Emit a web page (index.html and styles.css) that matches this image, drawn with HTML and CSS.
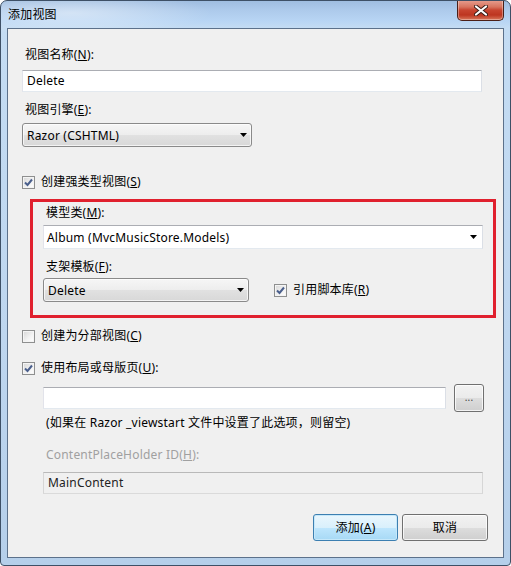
FILE: index.html
```html
<!DOCTYPE html>
<html lang="zh-CN">
<head>
<meta charset="utf-8">
<title>添加视图</title>
<link rel="stylesheet" href="styles.css">
</head>
<body>
<div class="window">
  <div class="titlebar">
    <span class="title">添加视图</span>
    <div class="close">
      <svg width="14" height="11" viewBox="0 0 14 11"><path d="M2 1.5 L12 9.5 M12 1.5 L2 9.5" stroke="#3a1c16" stroke-width="4" stroke-linecap="round"/><path d="M2 1.5 L12 9.5 M12 1.5 L2 9.5" stroke="#ffffff" stroke-width="2.2" stroke-linecap="round"/></svg>
    </div>
  </div>
  <div class="client">
    <div class="label m-l1">视图名称(<u>N</u>):</div>
    <div class="textbox w-full m-tb1">Delete</div>
    <div class="label m-l2">视图引擎(<u>E</u>):</div>
    <div class="combo w-engine m-c1"><span>Razor (CSHTML)</span><svg class="arrow" width="7" height="4" viewBox="0 0 7 4"><path d="M0 0 H7 L3.5 4 Z" fill="#000"/></svg></div>
    <div class="check m-ck1"><span class="cb"><svg width="11" height="11" viewBox="0 0 11 11"><path d="M2 5.5 L4.5 8 L9 2.5" stroke="#4a5f8c" stroke-width="2" fill="none"/></svg></span>创建强类型视图(<u>S</u>)</div>
    <div class="redbox">
      <div class="label">模型类(<u>M</u>):</div>
      <div class="ecombo w-model m-c2"><span>Album (MvcMusicStore.Models)</span><svg class="arrow" width="7" height="4" viewBox="0 0 7 4"><path d="M0 0 H7 L3.5 4 Z" fill="#000"/></svg></div>
      <div class="label m-l3">支架模板(<u>F</u>):</div>
      <div class="row m-r1">
        <div class="combo w-scaffold"><span>Delete</span><svg class="arrow" width="7" height="4" viewBox="0 0 7 4"><path d="M0 0 H7 L3.5 4 Z" fill="#000"/></svg></div>
        <div class="check m-ck-scripts"><span class="cb"><svg width="11" height="11" viewBox="0 0 11 11"><path d="M2 5.5 L4.5 8 L9 2.5" stroke="#4a5f8c" stroke-width="2" fill="none"/></svg></span>引用脚本库(<u>R</u>)</div>
      </div>
    </div>
    <div class="check m-ck2"><span class="cb"></span>创建为分部视图(<u>C</u>)</div>
    <div class="check m-ck3"><span class="cb"><svg width="11" height="11" viewBox="0 0 11 11"><path d="M2 5.5 L4.5 8 L9 2.5" stroke="#4a5f8c" stroke-width="2" fill="none"/></svg></span>使用布局或母版页(<u>U</u>):</div>
    <div class="row m-r2 indent">
      <div class="textbox w-layout"></div>
      <div class="btn btn-browse">...</div>
    </div>
    <div class="label indent m-help">(如果在 Razor _viewstart 文件中设置了此选项，则留空)</div>
    <div class="label indent disabled m-l4">ContentPlaceHolder ID(<u>H</u>):</div>
    <div class="textbox tb-disabled indent w-placeholder m-tb2">MainContent</div>
    <div class="buttons">
      <div class="btn btn-default btn-add">添加(<u>A</u>)</div>
      <div class="btn btn-cancel">取消</div>
    </div>
  </div>
</div>
</body>
</html>
```
FILE: styles.css
```css
* { box-sizing: border-box; }
html, body { margin: 0; padding: 0; background: #ffffff; }
body {
  font-family: "Noto Sans", "Noto Sans CJK SC", sans-serif;
  font-size: 12px;
  letter-spacing: 0.2px;
  color: #000;
}
u { text-decoration: underline; text-underline-offset: 1px; }

.window {
  width: 511px;
  height: 566px;
  border: 1px solid #3e5066;
  border-radius: 7px 7px 4px 4px;
  background:
    radial-gradient(ellipse 140px 22px at 70px 12px, rgba(255,255,255,0.45), rgba(255,255,255,0) 100%),
    linear-gradient(to bottom, #9fbde0 0px, #aecbec 10px, #b8d5f4 20px, #c4dcf3 27px, #bed6ef 60%, #b5cfea 100%);
  display: flex;
  flex-direction: column;
  overflow: hidden;
}

.titlebar {
  height: 27px;
  flex: none;
  display: flex;
  justify-content: space-between;
  align-items: flex-start;
  padding: 0 6px 0 7px;
}
.title {
  align-self: center;
  line-height: 16px;
  margin-top: 1px;
  color: #000;
}
.close {
  width: 47px;
  height: 21px;
  margin-top: -1px;
  border: 1px solid #4a1f18;
  border-top: none;
  border-radius: 0 0 5px 5px;
  background: linear-gradient(to bottom, #e8a091 0%, #d7735e 35%, #c84530 50%, #bd3520 75%, #d9775b 100%);
  box-shadow: inset 0 0 0 1px rgba(255,255,255,0.35);
  display: flex;
  align-items: center;
  justify-content: center;
}

.client {
  flex: 1;
  margin: 0 6px 7px;
  border: 1px solid #5c718b;
  background: #f0f0f0;
  padding: 0 0 0 14px;
  display: flex;
  flex-direction: column;
  align-items: flex-start;
}

.label { line-height: 16px; padding-left: 3px; white-space: nowrap; }
.label.disabled { color: #a0a0a0; }
.indent { margin-left: 21px; }

.textbox {
  height: 22px;
  border: 1px solid;
  border-color: #abadb3 #dbdfe6 #e3e9ef #e2e3ea;
  background: #fff;
  padding: 0 4px;
  line-height: 20px;
}
.tb-disabled { background: #f0f0f0; border-color: #b9b9b9 #d6d6d6 #dadada #d6d6d6; color: #222; }

.combo {
  height: 24px;
  border: 1px solid #8a8a8a;
  border-radius: 3px;
  background: linear-gradient(to bottom, #f6f6f6 0%, #ededed 50%, #e1e1e1 51%, #d8d8d8 100%);
  box-shadow: inset 0 0 0 1px rgba(255,255,255,0.7);
  display: flex;
  align-items: center;
  justify-content: space-between;
  padding: 0 4px 0 4px;
}
.ecombo {
  height: 24px;
  border: 1px solid;
  border-color: #abadb3 #dbdfe6 #e3e9ef #e2e3ea;
  background: #fff;
  display: flex;
  align-items: center;
  justify-content: space-between;
  padding: 0 5px 0 3px;
}
.arrow { flex: none; }

.check { display: flex; align-items: center; line-height: 16px; white-space: nowrap; }
.cb {
  width: 13px;
  height: 13px;
  margin-right: 6px;
  border: 1px solid #8e8f8f;
  background: linear-gradient(135deg, #d6d6d6 0%, #f3f3f3 60%, #ffffff 100%);
  box-shadow: inset 0 0 0 1px #f4f4f4;
  display: flex;
  align-items: center;
  justify-content: center;
  flex: none;
}
.cb svg { display: block; }

.row { display: flex; align-items: center; }

.redbox {
  width: 466px;
  height: 119px;
  margin: 9px 0 0 8px;
  border: 3px solid #e0202e;
  padding: 3px 0 0 10px;
  display: flex;
  flex-direction: column;
  align-items: flex-start;
}

.btn {
  border: 1px solid #707070;
  border-radius: 3px;
  background: linear-gradient(to bottom, #f2f2f2 0%, #ebebeb 50%, #dddddd 51%, #cfcfcf 100%);
  box-shadow: inset 0 0 0 1px rgba(255,255,255,0.75);
  display: flex;
  align-items: center;
  justify-content: center;
  line-height: 16px;
}
.btn-default {
  border-color: #3c7fb1;
  background: linear-gradient(to bottom, #eaf6fd 0%, #d9f0fc 50%, #bee6fd 51%, #a7d9f5 100%);
  box-shadow: inset 0 0 0 1px #c6e8fa;
}
.btn-browse { width: 30px; height: 28px; margin-left: 8px; font-size: 10px; color: #444; padding-bottom: 3px; }
.buttons {
  align-self: stretch;
  display: flex;
  justify-content: flex-end;
  gap: 4px;
  padding-right: 15px;
  margin-top: 20px;
}
.btn-add { width: 85px; height: 27px; }
.btn-cancel { width: 86px; height: 27px; }

.w-full { width: 460px; }
.w-engine { width: 230px; }
.w-model { width: 440px; }
.w-scaffold { width: 206px; }
.w-layout { width: 403px; }
.w-placeholder { width: 440px; }

.m-l1 { margin-top: 18px; }
.m-tb1 { margin-top: 7px; }
.m-l2 { margin-top: 10px; }
.m-c1 { margin-top: 5px; }
.m-ck1 { margin-top: 27px; }
.m-c2 { margin-top: 4px; }
.m-l3 { margin-top: 10px; }
.m-r1 { margin-top: 3px; }
.m-ck-scripts { margin-left: 25px; }
.m-ck2 { margin-top: 10px; }
.m-ck3 { margin-top: 16px; }
.m-r2 { margin-top: 8px; }
.m-help { margin-top: 3px; }
.m-l4 { margin-top: 16px; }
.m-tb2 { margin-top: 9px; }
```
